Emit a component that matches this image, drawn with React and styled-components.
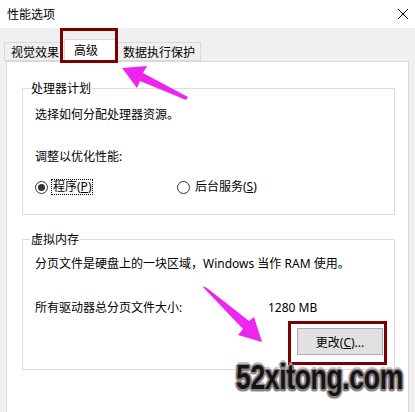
import React from 'react';
import styled, { createGlobalStyle } from 'styled-components';

const GlobalStyle = createGlobalStyle`
  html, body {
    margin: 0;
    padding: 0;
    background: #f0f0f0;
  }
  #root {
    width: 415px;
    height: 412px;
    overflow: hidden;
  }
`;

const Window = styled.div`
  position: relative;
  width: 415px;
  height: 412px;
  overflow: hidden;
  background: #f0f0f0;
  font-family: "Noto Sans", "Noto Sans CJK SC", sans-serif;
  font-size: 12px;
  line-height: 16px;
  color: #000;
`;

const TitleBar = styled.div`
  height: 28px;
  background: #fff;
  display: flex;
  align-items: center;
  justify-content: space-between;
  padding: 0 6px 0 7px;
  box-sizing: border-box;
`;

const Title = styled.span`
  font-family: "Noto Sans CJK SC", sans-serif;
`;

const Body = styled.div`
  padding: 0 6px 0 6px;
`;

const TabRow = styled.div`
  display: flex;
  align-items: flex-end;
  height: 22px;
  margin: 11px 0 0 -2px;
  position: relative;
  z-index: 1;
`;

const Tab = styled.div`
  box-sizing: border-box;
  height: ${p => (p.active ? '23px' : '19px')};
  margin-bottom: ${p => (p.active ? '-1px' : '0')};
  margin-left: ${p => (p.active ? '-2px' : '-1px')};
  padding: ${p => p.pad};
  padding-bottom: ${p => (p.active ? '3px' : '0')};
  display: flex;
  align-items: center;
  background: ${p => (p.active ? '#fff' : '#f0f0f0')};
  border: 1px solid #d9d9d9;
  border-bottom: ${p => (p.active ? 'none' : '1px solid #d9d9d9')};
  font-family: "Noto Sans CJK SC", sans-serif;
  z-index: ${p => (p.active ? 2 : 1)};
  &:first-child {
    margin-left: 0;
  }
`;

const Panel = styled.div`
  box-sizing: border-box;
  width: 403px;
  height: 370px;
  background: #fff;
  border: 1px solid #d9d9d9;
  padding: 26px 13px 0 15px;
`;

const Group = styled.div`
  position: relative;
  box-sizing: border-box;
  height: ${p => p.h}px;
  border: 1px solid #dcdcdc;
  padding: ${p => p.pt}px 0 0 12px;
  margin-bottom: 24px;
`;

const Legend = styled.span`
  position: absolute;
  top: -9px;
  left: 7px;
  background: #fff;
  padding: 0 1px;
  font-family: "Noto Sans CJK SC", sans-serif;
`;

const Line = styled.div`
  margin-top: ${p => p.mt || 0}px;
  white-space: nowrap;
`;

const RadioRow = styled.div`
  display: grid;
  grid-template-columns: 142px auto;
  margin-top: 14px;
`;

const RadioItem = styled.label`
  display: flex;
  align-items: center;
  gap: 3px;
`;

const Circle = styled.span`
  box-sizing: border-box;
  width: 13px;
  height: 13px;
  border-radius: 50%;
  border: 1px solid #333;
  background: #fff;
  display: flex;
  align-items: center;
  justify-content: center;
  &::after {
    content: '';
    display: ${p => (p.checked ? 'block' : 'none')};
    width: 7px;
    height: 7px;
    border-radius: 50%;
    background: #333;
  }
`;

const RadioText = styled.span`
  padding: 0 1px;
  border: 1px dotted ${p => (p.focused ? '#000' : 'transparent')};
  line-height: 14px;
`;

const SizeRow = styled.div`
  display: grid;
  grid-template-columns: 233px auto;
  margin-top: 28px;
`;

const ButtonRow = styled.div`
  display: flex;
  justify-content: flex-end;
  padding-right: 11px;
  margin-top: 12px;
`;

const Button = styled.button`
  box-sizing: border-box;
  width: 86px;
  height: 27px;
  background: #e1e1e1;
  border: 1px solid #adadad;
  font-family: "Noto Sans", "Noto Sans CJK SC", sans-serif;
  font-size: 12px;
  color: #000;
  padding: 0;
`;

const Highlight = styled.div`
  position: absolute;
  box-sizing: border-box;
  border: 3px solid #7d0000;
  pointer-events: none;
  z-index: 5;
`;

const Overlay = styled.svg`
  position: absolute;
  left: 0;
  top: 0;
  pointer-events: none;
  z-index: 6;
`;

const Watermark = styled.div`
  position: absolute;
  left: 236px;
  top: 357px;
  font-family: "Liberation Sans", Arial, sans-serif;
  font-weight: bold;
  font-size: 35px;
  line-height: 40px;
  color: #141414;
  transform: scaleX(0.76);
  transform-origin: left top;
  letter-spacing: -0.5px;
  z-index: 7;
  text-shadow:
    1.5px 0 0 #8a8282, -1.5px 0 0 #8a8282, 0 1.5px 0 #8a8282, 0 -1.5px 0 #8a8282,
    1.5px 1.5px 0 #8a8282, -1.5px -1.5px 0 #8a8282, 1.5px -1.5px 0 #8a8282, -1.5px 1.5px 0 #8a8282,
    3px 0 1px #c4bcbc, -3px 0 1px #c4bcbc, 0 3px 1px #c4bcbc, 0 -3px 1px #c4bcbc;
`;

const CloseIcon = () => (
  <svg width="12" height="12" viewBox="0 0 12 12">
    <path d="M1 1L11 11M11 1L1 11" stroke="#000" strokeWidth="1" />
  </svg>
);

export default function App() {
  return (
    <>
      <GlobalStyle />
      <Window>
        <TitleBar>
          <Title>性能选项</Title>
          <CloseIcon />
        </TitleBar>
        <Body>
          <TabRow>
            <Tab pad="0 6px">视觉效果</Tab>
            <Tab active pad="0 19px 0 9px">高级</Tab>
            <Tab pad="0 5px">数据执行保护</Tab>
          </TabRow>
          <Panel>
            <Group h={127} pt={18}>
              <Legend>处理器计划</Legend>
              <Line>选择如何分配处理器资源。</Line>
              <Line mt={26}>调整以优化性能:</Line>
              <RadioRow>
                <RadioItem>
                  <Circle checked />
                  <RadioText focused>程序(<u>P</u>)</RadioText>
                </RadioItem>
                <RadioItem>
                  <Circle />
                  <RadioText>后台服务(<u>S</u>)</RadioText>
                </RadioItem>
              </RadioRow>
            </Group>
            <Group h={131} pt={16}>
              <Legend>虚拟内存</Legend>
              <Line>分页文件是硬盘上的一块区域，Windows 当作 RAM 使用。</Line>
              <SizeRow>
                <span>所有驱动器总分页文件大小:</span>
                <span>1280 MB</span>
              </SizeRow>
              <ButtonRow>
                <Button>更改(<u>C</u>)...</Button>
              </ButtonRow>
            </Group>
          </Panel>
        </Body>

        <Highlight style={{ left: 60, top: 28, width: 58, height: 35 }} />
        <Highlight style={{ left: 288, top: 321, width: 99, height: 44 }} />

        <Overlay width="415" height="412" viewBox="0 0 415 412">
          <polygon
            fill="#f024f0"
            points="122,68 147,66 143,73 188,97 186,100 140,81 137,88"
          />
          <polygon
            fill="#f024f0"
            points="202,286 207,288 249,321 254,317 262,342 238,335 243,329"
          />
        </Overlay>

        <Watermark>52xitong.com</Watermark>
      </Window>
    </>
  );
}
